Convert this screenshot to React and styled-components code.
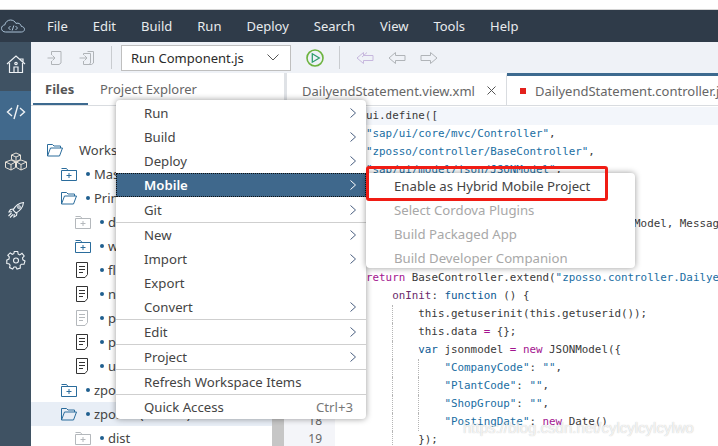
import styled, { createGlobalStyle } from 'styled-components';

const GlobalStyle = createGlobalStyle`
	html, body {
		margin: 0;
		padding: 0;
		background: #fff;
	}
	body {
		font-family: 'Noto Sans', 'Open Sans', sans-serif;
		color: #333;
	}
`;

const Page = styled.div`
	position: relative;
	width: 718px;
	height: 446px;
	overflow: hidden;
	display: flex;
	flex-direction: column;
	background: #fff;
`;

const TopStrip = styled.div`
	height: 9px;
	flex: none;
	border-bottom: 1px solid #d4d4d4;
`;

const Header = styled.header`
	height: 32px;
	flex: none;
	background: #2f3b49;
	display: flex;
	align-items: center;
`;

const LogoSlot = styled.div`
	width: 47px;
	flex: none;
	display: flex;
	padding-left: 1px;
	box-sizing: border-box;
	color: #a9c1d6;
`;

const Nav = styled.nav`
	display: flex;
	gap: 25px;
	font-size: 13px;
	color: #e8ebee;
`;

const Body = styled.div`
	flex: 1;
	min-height: 0;
	display: flex;
`;

const Sidebar = styled.aside`
	width: 31px;
	flex: none;
	background: #3f5263;
	display: flex;
	flex-direction: column;
`;

const SideItem = styled.div`
	height: 49px;
	flex: none;
	display: flex;
	justify-content: center;
	padding-top: 12px;
	box-sizing: border-box;
	color: #eef2f5;
	background: ${(p) => (p.$active ? '#41698c' : 'transparent')};
`;

const Main = styled.div`
	flex: 1;
	min-width: 0;
	display: flex;
	flex-direction: column;
`;

const Toolbar = styled.div`
	height: 31px;
	flex: none;
	background: #eff2f7;
	display: flex;
	align-items: center;
	padding-left: 8px;
	box-sizing: border-box;
`;

const ToolSlot = styled.div`
	width: 32px;
	flex: none;
	display: flex;
	justify-content: center;
	color: ${(p) => p.$color || '#b0b4b8'};
`;

const ToolDivider = styled.div`
	width: 1px;
	height: 23px;
	flex: none;
	background: #c9ccd0;
	margin: 0 9px 0 8px;
`;

const RunSelect = styled.div`
	width: 170px;
	height: 26px;
	flex: none;
	box-sizing: border-box;
	background: #fff;
	border: 1px solid #bfbfbf;
	display: flex;
	align-items: center;
	justify-content: space-between;
	padding: 0 11px 0 9px;
	font-size: 13px;
	color: #2b2b2b;
	margin-right: 8px;
`;

const Panes = styled.div`
	flex: 1;
	min-height: 0;
	display: flex;
`;

const FilesPane = styled.section`
	width: 253px;
	flex: none;
	display: flex;
	flex-direction: column;
`;

const FilesTabs = styled.div`
	height: 33px;
	flex: none;
	box-sizing: border-box;
	border-bottom: 1px solid #d9dce0;
	display: flex;
	padding-left: 2px;
	font-size: 13px;
`;

const FilesTab = styled.div`
	height: 32px;
	box-sizing: border-box;
	width: ${(p) => (p.$active ? '55px' : 'auto')};
	padding: 7px 12px 0;
	font-weight: ${(p) => (p.$active ? 700 : 400)};
	color: ${(p) => (p.$active ? '#555' : '#666')};
	border-bottom: ${(p) => (p.$active ? '2px solid #3d6a8f' : 'none')};
`;

const TreeArea = styled.div`
	flex: 1;
	min-height: 0;
	display: flex;
`;

const Tree = styled.div`
	flex: 1;
	min-width: 0;
	padding-top: 32px;
	overflow: hidden;
	font-size: 13px;
`;

const TreeRow = styled.div`
	height: 24px;
	display: flex;
	align-items: center;
	white-space: nowrap;
	padding-left: ${(p) => 16 + p.$level * 14}px;
	background: ${(p) => (p.$selected ? '#e8eef6' : 'transparent')};
	color: #444;
`;

const TreeIcon = styled.span`
	width: 16px;
	height: 16px;
	flex: none;
	display: flex;
	align-items: center;
	color: ${(p) => p.$color};
`;

const TreeDot = styled.span`
	width: 4px;
	height: 4px;
	border-radius: 50%;
	flex: none;
	background: #1f5f8f;
	margin: 0 4px 0 9px;
`;

const TreeSpacer = styled.span`
	width: 16px;
	flex: none;
`;

const ScrollTrack = styled.div`
	width: 12px;
	flex: none;
	background: #c6c6c6;
`;

const EditorPane = styled.section`
	flex: 1;
	min-width: 0;
	display: flex;
	flex-direction: column;
`;

const EditorTabs = styled.div`
	height: 33px;
	flex: none;
	box-sizing: border-box;
	border-left: 3px solid #dfe2e6;
	border-bottom: 1px solid #d9dce0;
	display: flex;
	font-size: 13px;
	color: #666;
	white-space: nowrap;
`;

const EditorTab = styled.div`
	display: flex;
	align-items: center;
	box-sizing: border-box;
	width: ${(p) => (p.$active ? 'auto' : '220px')};
	flex: ${(p) => (p.$active ? 1 : 'none')};
	min-width: 0;
	overflow: hidden;
	padding-left: ${(p) => (p.$active ? '13px' : '15px')};
	border-right: ${(p) => (p.$active ? 'none' : '1px solid #d9dce0')};
	border-top: 3px solid ${(p) => (p.$active ? '#3d6a8f' : 'transparent')};
`;

const DirtyMark = styled.span`
	width: 6px;
	height: 6px;
	flex: none;
	background: #e3211c;
	margin-right: 9px;
`;

const CloseMark = styled.span`
	margin-left: 12px;
	display: flex;
	color: #555;
`;

const CodeArea = styled.div`
	flex: 1;
	min-height: 0;
	display: flex;
	font-family: 'DejaVu Sans Mono', 'Liberation Mono', monospace;
	font-size: 10.86px;
	line-height: 18px;
`;

const Gutter = styled.div`
	width: 51px;
	flex: none;
	background: #f4f5f9;
	color: #666;
	text-align: right;
	padding-right: 13px;
	box-sizing: border-box;
	font-family: 'Noto Sans', sans-serif;
	font-size: 12px;
`;

const Code = styled.div`
	flex: 1;
	min-width: 0;
	overflow: hidden;
	padding-top: 1px;
`;

const CodeLine = styled.div`
	height: 18px;
	padding-left: 31px;
	white-space: pre;
	color: #3a3a3a;
	background: ${(p) => (p.$current ? '#f3f6fb' : 'transparent')};
`;

const Indent = styled.span`
	display: inline-block;
	width: 4ch;
	height: 18px;
	vertical-align: top;
	box-sizing: border-box;
	border-left: ${(p) => (p.$guide ? '1px dotted #b5b5b5' : 'none')};
`;

const Str = styled.span`
	color: #1a6ea3;
`;

const Key = styled.span`
	color: #0c5a94;
`;

const Pink = styled.span`
	color: #a3148f;
`;

const Prop = styled.span`
	color: #6b2a6b;
`;

const Menu = styled.div`
	position: absolute;
	left: 116px;
	top: 100px;
	width: 250px;
	height: 319px;
	box-sizing: border-box;
	padding-top: 1px;
	background: #fff;
	border-radius: 4px;
	box-shadow: 0 0 6px rgba(0, 0, 0, 0.4);
	font-size: 13.2px;
	color: #444;
`;

const SubMenu = styled(Menu)`
	left: 366px;
	top: 173px;
	width: 269px;
	height: 95px;
`;

const MenuRow = styled.div`
	display: flex;
	align-items: center;
	justify-content: space-between;
	box-sizing: border-box;
	padding: 0 10px 0 28px;
	white-space: nowrap;
	color: ${(p) => (p.$disabled ? '#a8a8a8' : p.$hover ? '#fff' : '#444')};
	font-weight: ${(p) => (p.$hover ? 600 : 400)};
	background: ${(p) => (p.$hover ? '#3f688c' : 'transparent')};
	outline: ${(p) => (p.$hover ? '1px dotted #111' : 'none')};
	outline-offset: -1px;
	margin-bottom: ${(p) => (p.$hover ? '1px' : '0')};
	border-bottom: ${(p) => (p.$rule ? '1px solid #cfcfcf' : 'none')};
	height: ${(p) => (p.$rule ? '25px' : '24px')};
`;

const Shortcut = styled.span`
	color: #777;
	margin-right: 3px;
`;

const RedBox = styled.div`
	position: absolute;
	left: 366px;
	top: 166px;
	width: 242px;
	height: 35px;
	box-sizing: border-box;
	border: 3px solid #f01c14;
	border-radius: 3px;
`;

const Watermark = styled.div`
	position: absolute;
	left: 463px;
	top: 419px;
	font-family: 'Liberation Sans', Arial, sans-serif;
	font-size: 15px;
	color: rgba(255, 255, 255, 0.8);
	text-shadow: 0 0 1px rgba(140, 140, 140, 0.6);
	white-space: nowrap;
`;

const Logo = () => (
	<svg width='24' height='14' viewBox='0 0 24 14' fill='none' stroke='currentColor' strokeWidth='1'>
		<path d='M6 13H4.500C2.200 13 .5 11.400 .5 9.400C.5 7.500 2 6.100 3.800 5.900C4.300 3.200 6.600 1 9.500 1C12 1 14 2.400 15 4.500C15.600 4.200 16.300 4.100 17 4.200C18.800 4.400 20 5.700 20.200 7.300C22 7.500 23.500 8.700 23.500 10.300C23.500 12 22 13 20.300 13H6Z' />
		<path d='M9.500 7L7.500 9L9.500 11M14.500 7L16.500 9L14.500 11M12.800 6.500L11.200 11.500' />
	</svg>
);

const HomeIcon = () => (
	<svg width='20' height='20' viewBox='0 0 20 20' fill='none' stroke='currentColor' strokeWidth='1.200'>
		<path d='M1 10L10 2L19 10M17 8.500V5H14.500V6.300' />
		<path d='M3.500 9V18.500H16.500V9' />
		<path d='M8 18.500V13H12V18.500' />
		<circle cx='10' cy='9.500' r='1.200' />
	</svg>
);

const CodeIcon = () => (
	<svg width='20' height='18' viewBox='0 0 20 18' fill='none' stroke='currentColor' strokeWidth='1.400'>
		<path d='M6 5L1.500 9L6 13M14 5L18.500 9L14 13M12 2L8 16' />
	</svg>
);

const BoxesIcon = () => (
	<svg width='24' height='20' viewBox='0 0 24 20' fill='none' stroke='#e8e2d8' strokeWidth='1'>
		<path d='M12 1L16.500 3V7.500L12 9.500L7.500 7.500V3Z M7.500 3L12 5L16.500 3M12 5V9.500' />
		<path d='M7 8L11.500 10V15.500L7 18L1.500 15.500V10Z M1.500 10L7 12.500L11.500 10M7 12.500V18' />
		<path d='M17 8L22.500 10V15.500L17 18L12.500 15.500V10Z M12.500 10L17 12.500L22.500 10M17 12.500V18' />
	</svg>
);

const RocketIcon = () => (
	<svg width='18' height='18' viewBox='0 0 18 18' fill='none' stroke='currentColor' strokeWidth='1.100'>
		<path d='M16.500 1.500C12 2 8.500 4.500 6 9L9 12C13.500 9.500 16 6 16.500 1.500Z' />
		<path d='M6.500 8L3.500 8.500L2 11L5 10.800M10 11.500L9.500 14.500L7 16L7.200 13' />
		<path d='M4.500 12L1.500 15M6 13.500L3 16.500' />
		<circle cx='12' cy='6' r='1.300' />
	</svg>
);

const GearIcon = () => (
	<svg width='20' height='20' viewBox='0 0 20 20' fill='none' stroke='currentColor' strokeWidth='1.100'>
		<path d='M8.300 1.500H11.700L12.200 4.200L13.800 4.900L16 3.300L18.200 6L16.500 8L16.900 9.800L19 11L18 14.300L15.400 14.200L14.200 15.500L14.300 18L11 19L9.900 17L8 17L6.700 19L3.600 17.600L4.100 15.200L3 13.800L.8 13.500L.8 10L3 9L3.300 7L1.800 5.200L4.200 2.900L6.200 4.300L7.800 3.700Z' />
		<circle cx='10' cy='10.500' r='2.500' />
	</svg>
);

const EnterDocIcon = ({ double }) => (
	<svg width='16' height='16' viewBox='0 0 16 16' fill='none' stroke='currentColor' strokeWidth='1'>
		{double && <path d='M8.500 1.500H14.500V13L12.500 14.500H8' />}
		{!double && <path d='M4.500 5V1.500H14V13L12 14.500H4.500V11' />}
		{double && <path d='M4.500 5V3.500H11.500V13L10 14.500H4.500V11' />}
		<path d='M.5 8H8M5.500 5.500L8 8L5.500 10.500' />
	</svg>
);

const Chevron = () => (
	<svg width='12' height='7' viewBox='0 0 12 7' fill='none' stroke='#555' strokeWidth='1'>
		<path d='M.5 .5L6 6L11.500 .5' />
	</svg>
);

const RunIcon = () => (
	<svg width='18' height='18' viewBox='0 0 18 18' fill='none'>
		<circle cx='9' cy='9' r='8' stroke='#6cb33f' strokeWidth='1.600' />
		<path d='M6.300 4.800L13.300 9L6.300 13.200Z' stroke='#2f9e6e' strokeWidth='1.300' />
	</svg>
);

const ArrowIcon = ({ dir, pair }) => (
	<svg width='18' height='14' viewBox='0 0 18 14' fill='none' stroke='currentColor' strokeWidth='1'>
		<g transform={dir === 'right' ? 'matrix(-1 0 0 1 18 0)' : undefined}>
			<path d='M7.500 1.500L1 7L7.500 12.500V9.500H17V4.500H7.500Z' />
			{pair && <path d='M11 1.500L6 6' />}
		</g>
	</svg>
);

const FolderIcon = ({ open }) =>
	open ? (
		<svg width='16' height='14' viewBox='0 0 16 14' fill='none' stroke='currentColor' strokeWidth='1'>
			<path d='M.5 13V1.500H5.500L7 3H13.500V5' />
			<path d='M.5 13H12.500L15.500 5H3.500L.5 13Z' />
		</svg>
	) : (
		<svg width='16' height='14' viewBox='0 0 16 14' fill='none' stroke='currentColor' strokeWidth='1'>
			<path d='M.5 1.500H5.500L7 3.500H15.500' />
			<path d='M.5 3.500H15.500V13.500H.5Z' />
			<path d='M8 6V11M5.500 8.500H10.500' />
		</svg>
	);

const DocIcon = () => (
	<svg width='14' height='16' viewBox='0 0 14 16' fill='none' stroke='currentColor' strokeWidth='1'>
		<path d='M1.500 .5H12.500V12.500L10 15.500H1.500Z' />
		<path d='M4 4.500H10M4 7.500H10M4 10.500H8' />
	</svg>
);

const MenuArrow = ({ color }) => (
	<svg width='6' height='10' viewBox='0 0 6 10' fill='none' stroke={color || '#4a5f80'} strokeWidth='1'>
		<path d='M.5 .5L5.500 5L.5 9.500' />
	</svg>
);

const navItems = ['File', 'Edit', 'Build', 'Run', 'Deploy', 'Search', 'View', 'Tools', 'Help'];

const treeItems = [
	{ level: 0, kind: 'open', name: 'Workspace', plain: true },
	{ level: 1, kind: 'closed', name: 'MasterData' },
	{ level: 1, kind: 'open', name: 'PrintProject' },
	{ level: 2, kind: 'closed', name: 'dist', muted: true },
	{ level: 2, kind: 'closed', name: 'webapp' },
	{ level: 2, kind: 'doc', name: 'flpSandbox.html' },
	{ level: 2, kind: 'doc', name: 'neo-app.json' },
	{ level: 2, kind: 'doc', name: 'package-lock.json', muted: true },
	{ level: 2, kind: 'doc', name: 'project.json' },
	{ level: 2, kind: 'doc', name: 'ui5.yaml' },
	{ level: 1, kind: 'closed', name: 'zposso' },
	{ level: 1, kind: 'open', name: 'zposso (master)', selected: true },
	{ level: 2, kind: 'closed', name: 'dist', muted: true },
];

const menuItems = [
	{ label: 'Run', more: true },
	{ label: 'Build', more: true },
	{ label: 'Deploy', more: true },
	{ label: 'Mobile', more: true, hover: true },
	{ label: 'Git', more: true, rule: true },
	{ label: 'New', more: true },
	{ label: 'Import', more: true },
	{ label: 'Export' },
	{ label: 'Convert', more: true, rule: true },
	{ label: 'Edit', more: true, rule: true },
	{ label: 'Project', more: true, rule: true },
	{ label: 'Refresh Workspace Items', rule: true },
	{ label: 'Quick Access', shortcut: 'Ctrl+3' },
];

const subItems = [
	{ label: 'Enable as Hybrid Mobile Project' },
	{ label: 'Select Cordova Plugins', disabled: true },
	{ label: 'Build Packaged App', disabled: true },
	{ label: 'Build Developer Companion', disabled: true },
];

const TreeItem = ({ item }) => {
	const blue = item.muted ? '#b4b8bc' : '#2a6c9c';
	const ink = item.muted ? '#b4b8bc' : '#333';
	return (
		<TreeRow $level={item.level} $selected={item.selected}>
			<TreeIcon $color={item.kind === 'doc' ? ink : blue}>
				{item.kind === 'doc' ? <DocIcon /> : <FolderIcon open={item.kind === 'open'} />}
			</TreeIcon>
			{item.plain ? <TreeSpacer /> : <TreeDot />}
			{item.name}
		</TreeRow>
	);
};

const CodeLines = () => (
	<Code>
		<CodeLine $current>ui.define([</CodeLine>
		<CodeLine><Str>"sap/ui/core/mvc/Controller"</Str>,</CodeLine>
		<CodeLine><Str>"zposso/controller/BaseController"</Str>,</CodeLine>
		<CodeLine><Str>"sap/ui/model/json/JSONModel"</Str>,</CodeLine>
		<CodeLine> </CodeLine>
		<CodeLine> </CodeLine>
		<CodeLine><Key>function</Key>(Controller, BaseController, JSONModel, MessageToast) {'{'}</CodeLine>
		<CodeLine> </CodeLine>
		<CodeLine> </CodeLine>
		<CodeLine><Pink>return</Pink> BaseController.extend(<Str>"zposso.controller.DailyendStatement"</Str>, {'{'}</CodeLine>
		<CodeLine><Indent /><Prop>onInit</Prop>: <Key>function</Key> () {'{'}</CodeLine>
		<CodeLine><Indent /><Indent $guide />this.getuserinit(this.getuserid());</CodeLine>
		<CodeLine><Indent /><Indent $guide />this.data <Pink>=</Pink> {'{}'};</CodeLine>
		<CodeLine><Indent /><Indent $guide /><Key>var</Key> jsonmodel <Pink>=</Pink> <Pink>new</Pink> JSONModel{'({'}</CodeLine>
		<CodeLine><Indent /><Indent $guide /><Indent $guide /><Str>"CompanyCode"</Str>: <Str>""</Str>,</CodeLine>
		<CodeLine><Indent /><Indent $guide /><Indent $guide /><Str>"PlantCode"</Str>: <Str>""</Str>,</CodeLine>
		<CodeLine><Indent /><Indent $guide /><Indent $guide /><Str>"ShopGroup"</Str>: <Str>""</Str>,</CodeLine>
		<CodeLine><Indent /><Indent $guide /><Indent $guide /><Str>"PostingDate"</Str>: <Pink>new</Pink> Date()</CodeLine>
		<CodeLine><Indent /><Indent $guide />{'});'}</CodeLine>
	</Code>
);

const App = () => (
	<>
		<GlobalStyle />
		<Page>
			<TopStrip />
			<Header>
				<LogoSlot><Logo /></LogoSlot>
				<Nav>
					{navItems.map((item) => (
						<span key={item}>{item}</span>
					))}
				</Nav>
			</Header>
			<Body>
				<Sidebar>
					<SideItem><HomeIcon /></SideItem>
					<SideItem $active><CodeIcon /></SideItem>
					<SideItem><BoxesIcon /></SideItem>
					<SideItem><RocketIcon /></SideItem>
					<SideItem><GearIcon /></SideItem>
				</Sidebar>
				<Main>
					<Toolbar>
						<ToolSlot><EnterDocIcon /></ToolSlot>
						<ToolSlot><EnterDocIcon double /></ToolSlot>
						<ToolDivider />
						<RunSelect>
							Run Component.js
							<Chevron />
						</RunSelect>
						<ToolSlot><RunIcon /></ToolSlot>
						<ToolDivider />
						<ToolSlot $color='#c7b8de'><ArrowIcon pair /></ToolSlot>
						<ToolSlot><ArrowIcon /></ToolSlot>
						<ToolSlot><ArrowIcon dir='right' /></ToolSlot>
					</Toolbar>
					<Panes>
						<FilesPane>
							<FilesTabs>
								<FilesTab $active>Files</FilesTab>
								<FilesTab>Project Explorer</FilesTab>
							</FilesTabs>
							<TreeArea>
								<Tree>
									{treeItems.map((item, i) => (
										<TreeItem key={i} item={item} />
									))}
								</Tree>
								<ScrollTrack />
							</TreeArea>
						</FilesPane>
						<EditorPane>
							<EditorTabs>
								<EditorTab>
									DailyendStatement.view.xml
									<CloseMark>
										<svg width='9' height='9' viewBox='0 0 9 9' stroke='currentColor' strokeWidth='1'>
											<path d='M.5 .5L8.500 8.500M8.500 .5L.5 8.500' />
										</svg>
									</CloseMark>
								</EditorTab>
								<EditorTab $active>
									<DirtyMark />
									DailyendStatement.controller.js
								</EditorTab>
							</EditorTabs>
							<CodeArea>
								<Gutter>
									{Array.from({ length: 19 }, (_, i) => (
										<div key={i}>{i + 1}</div>
									))}
								</Gutter>
								<CodeLines />
							</CodeArea>
						</EditorPane>
					</Panes>
				</Main>
			</Body>
			<Menu>
				{menuItems.map((item) => (
					<MenuRow key={item.label} $hover={item.hover} $rule={item.rule}>
						{item.label}
						{item.more && <MenuArrow color={item.hover ? '#fff' : undefined} />}
						{item.shortcut && <Shortcut>{item.shortcut}</Shortcut>}
					</MenuRow>
				))}
			</Menu>
			<SubMenu>
				{subItems.map((item) => (
					<MenuRow key={item.label} $disabled={item.disabled}>
						{item.label}
					</MenuRow>
				))}
			</SubMenu>
			<RedBox />
			<Watermark>https://blog.csdn.net/cylcylcylcylwo</Watermark>
		</Page>
	</>
);

export default App;
